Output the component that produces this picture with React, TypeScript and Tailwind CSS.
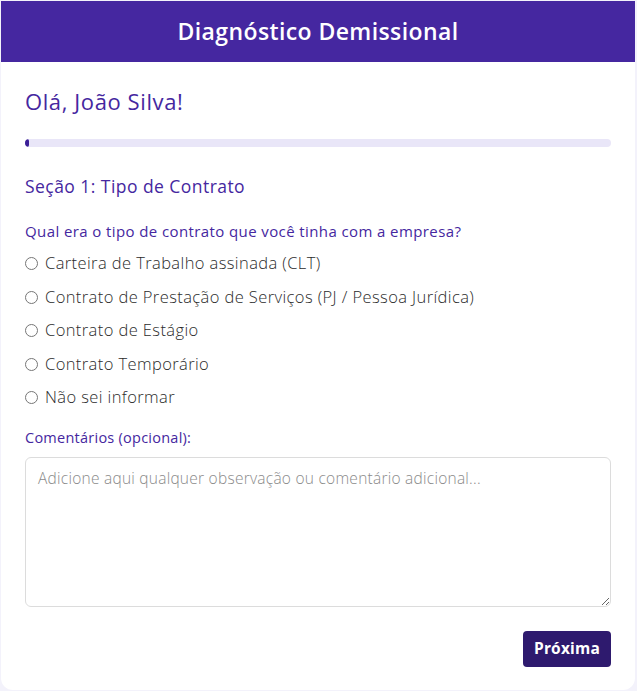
import React from 'react';

const options = [
  'Carteira de Trabalho assinada (CLT)',
  'Contrato de Prestação de Serviços (PJ / Pessoa Jurídica)',
  'Contrato de Estágio',
  'Contrato Temporário',
  'Não sei informar',
];

export default function App() {
  return (
    <div className="min-h-screen bg-[#f3f2fb] pl-px pt-px font-['Open_Sans',sans-serif]">
      <div className="w-[634px] h-[689px] bg-white rounded-b-xl overflow-hidden flex flex-col">
        <header className="h-[61px] bg-[#4527a0] flex items-center justify-center">
          <h1 className="text-white text-[23px] font-semibold tracking-[0.4px]">Diagnóstico Demissional</h1>
        </header>

        <div className="px-6 pt-[25px] flex flex-col">
          <h2 className="text-[#4527a0] text-[22px] font-medium leading-7 tracking-[0.6px]">Olá, João Silva!</h2>

          <div className="mt-[24px] h-2 w-full rounded-full bg-[#e9e6f8] overflow-hidden">
            <div className="h-full w-[4px] rounded-full bg-[#3b1f96]" />
          </div>

          <h3 className="mt-[27px] text-[#4527a0] text-[17.5px] leading-6 tracking-[0.45px]">Seção 1: Tipo de Contrato</h3>

          <p className="mt-[23px] text-[#4527a0] text-[15px] font-medium leading-5 tracking-[0.4px]">
            Qual era o tipo de contrato que você tinha com a empresa?
          </p>

          <div className="mt-[6px] flex flex-col">
            {options.map((o) => (
              <label key={o} className="h-[33.5px] flex items-center gap-[7px] text-[16.5px] font-light text-[#2b2b2b] tracking-[0.4px]">
                <input type="radio" name="contrato" className="w-[13px] h-[13px] m-0 accent-[#4527a0]" />
                <span>{o}</span>
              </label>
            ))}
          </div>

          <label className="mt-[13px] text-[#4527a0] text-[14.5px] font-medium leading-5 tracking-[0.25px]">Comentários (opcional):</label>

          <textarea
            className="mt-[9px] h-[150px] w-full rounded-md border border-[#dcdcdc] px-3 py-[9px] text-[15.5px] font-light tracking-[0.25px] text-[#333] placeholder:text-[#8a8a8a] outline-none"
            placeholder="Adicione aqui qualquer observação ou comentário adicional..."
          />

          <div className="mt-[24px] flex justify-end">
            <button className="h-9 px-[11px] rounded bg-[#2e1a6e] text-white text-[15.5px] font-bold tracking-[0.2px]">Próxima</button>
          </div>
        </div>
      </div>
    </div>
  );
}
